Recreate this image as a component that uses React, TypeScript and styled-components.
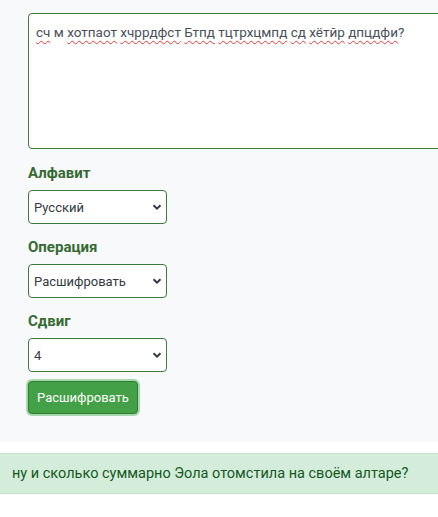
import React from 'react';
import styled, { createGlobalStyle } from 'styled-components';

const GlobalStyle = createGlobalStyle`
  body {
    margin: 0;
    background: #ffffff;
    font-family: Roboto, "Noto Sans", sans-serif;
    overflow: hidden;
  }
`;

const Panel = styled.div`
  background: #f8f9fa;
  padding: 13px 0 28px 28px;
`;

const Editor = styled.div`
  box-sizing: border-box;
  width: 440px;
  height: 136px;
  background: #fff;
  border: 1px solid #3b7a3b;
  border-radius: 4px;
  padding: 8px 7px;
  font-size: 13.5px;
  line-height: 20px;
  color: #495057;
`;

const Misspelled = styled.span`
  text-decoration: underline wavy #e53935;
  text-decoration-thickness: 1px;
  text-underline-offset: 3px;
`;

const Field = styled.div`
  margin-top: 12px;
  & + & {
    margin-top: 11px;
  }
`;

const Label = styled.label`
  display: block;
  font-weight: 700;
  font-size: 15px;
  line-height: 24px;
  color: #356b33;
  margin-bottom: 5px;
`;

const SelectWrap = styled.div`
  position: relative;
  width: 139px;
`;

const Select = styled.select`
  appearance: none;
  box-sizing: border-box;
  width: 100%;
  height: 34px;
  background: #fff;
  border: 1px solid #3b7a3b;
  border-radius: 4px;
  padding: 0 24px 0 5px;
  font-family: inherit;
  font-size: 13px;
  color: #343a40;
`;

const Chevron = styled.svg`
  position: absolute;
  right: 5px;
  top: 12px;
  width: 10px;
  height: 10px;
  pointer-events: none;
`;

const SubmitButton = styled.button`
  margin-top: 9px;
  height: 33px;
  padding: 0 8px;
  background: #43a047;
  border: 1px solid #2e7d32;
  border-radius: 4px;
  color: #fff;
  font-family: inherit;
  font-size: 13px;
  box-shadow: 0 0 0 2px rgba(102, 187, 106, 0.55);
`;

const Alert = styled.div`
  margin-top: 11px;
  height: 41px;
  box-sizing: border-box;
  display: flex;
  align-items: center;
  padding: 0 12px;
  background: #d4edda;
  border-top: 1px solid #c3e6cb;
  border-bottom: 1px solid #c3e6cb;
  color: #155724;
  font-size: 14.5px;
  white-space: nowrap;
`;

const words = 'сч|м|хотпаот|хчррдфст|Бтпд|тцтрхцмпд|сд|хётйр|дпцдфи'.split('|');

const SelectField: React.FC<{ label: string, value: string }> = ({ label, value }) => (
  <Field>
    <Label>{label}</Label>
    <SelectWrap>
      <Select defaultValue={value}>
        <option>{value}</option>
      </Select>
      <Chevron viewBox="0 0 10 10">
        <path d="M1.5 3.2 L5 6.6 L8.5 3.2" fill="none" stroke="#343a40" strokeWidth="2" />
      </Chevron>
    </SelectWrap>
  </Field>
);

const App: React.FC = () => (
  <>
    <GlobalStyle />
    <Panel>
      <Editor>
        {words.map((w, i) => (
          <React.Fragment key={i}>
            {w === 'м' ? w : <Misspelled>{w}</Misspelled>}
            {i < words.length - 1 ? ' ' : '?'}
          </React.Fragment>
        ))}
      </Editor>
      <SelectField label="Алфавит" value="Русский" />
      <SelectField label="Операция" value="Расшифровать" />
      <SelectField label="Сдвиг" value="4" />
      <SubmitButton>Расшифровать</SubmitButton>
    </Panel>
    <Alert>ну и сколько суммарно Эола отомстила на своём алтаре?</Alert>
  </>
);

export default App;
